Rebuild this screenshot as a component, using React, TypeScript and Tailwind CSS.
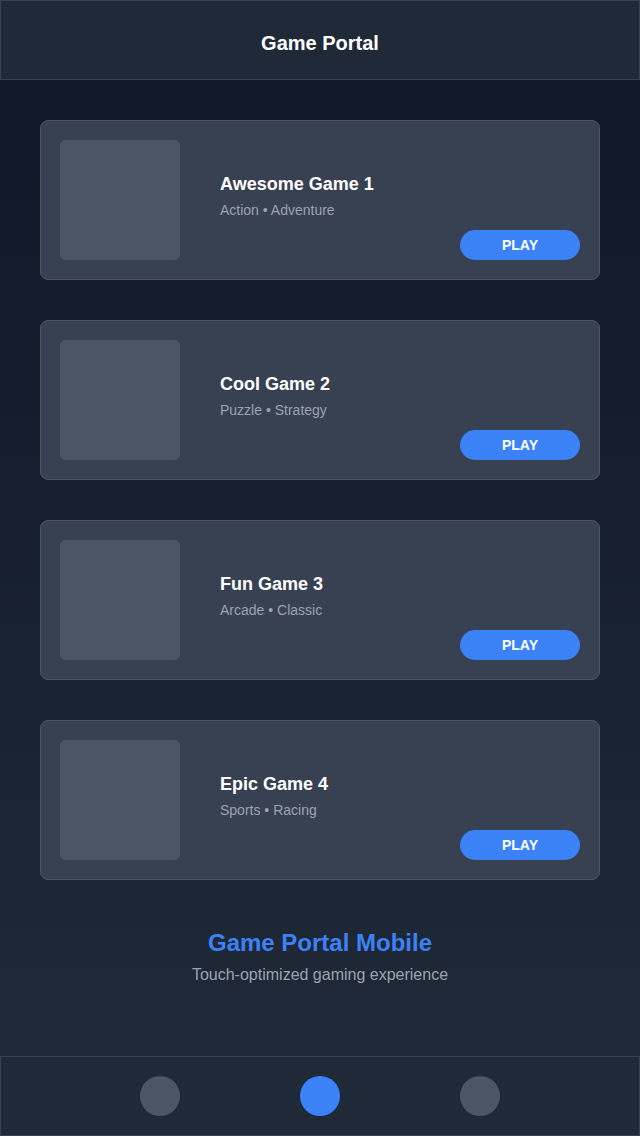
import React from "react";

const games = [
  { title: "Awesome Game 1", genre: "Action • Adventure" },
  { title: "Cool Game 2", genre: "Puzzle • Strategy" },
  { title: "Fun Game 3", genre: "Arcade • Classic" },
  { title: "Epic Game 4", genre: "Sports • Racing" },
];

export default function App() {
  return (
    <div
      className="flex h-[1136px] w-[640px] flex-col overflow-hidden bg-[#1f2937] text-white"
      style={{ fontFamily: '"Liberation Sans", Arial, sans-serif' }}
    >
      <header className="flex h-[80px] shrink-0 items-center justify-center border border-[#374151] bg-[#1f2937] pt-[6px]">
        <h1 className="text-[20px] font-bold leading-7">Game Portal</h1>
      </header>

      <main className="flex flex-1 flex-col bg-linear-to-b from-[#111827] to-[#1f2937] px-10 pt-10">
        <div className="flex flex-col gap-10">
          {games.map((g) => (
            <div
              key={g.title}
              className="flex h-[160px] items-stretch gap-10 rounded-lg border border-[#4b5563] bg-[#374151] p-[19px]"
            >
              <div className="h-[120px] w-[120px] shrink-0 rounded-md bg-[#4b5563]" />
              <div className="flex flex-1 flex-col justify-end">
                <div className="text-[18px] font-bold leading-7 text-white">{g.title}</div>
                <div className="mt-0.5 text-[14px] leading-5 text-[#9ca3af]">{g.genre}</div>
                <button className="mt-[10px] h-[30px] w-[120px] self-end rounded-full bg-[#3b82f6] text-[14px] font-bold text-white">
                  PLAY
                </button>
              </div>
            </div>
          ))}
        </div>

        <div className="mt-[47px] flex flex-col items-center">
          <div className="text-[24px] font-bold leading-8 text-[#3b82f6]">Game Portal Mobile</div>
          <div className="mt-1 text-[16px] leading-6 text-[#9ca3af]">Touch-optimized gaming experience</div>
        </div>
      </main>

      <nav className="flex h-[80px] shrink-0 items-center justify-center gap-[120px] border border-[#374151] bg-[#1f2937]">
        <div className="h-10 w-10 rounded-full bg-[#4b5563]" />
        <div className="h-10 w-10 rounded-full bg-[#3b82f6]" />
        <div className="h-10 w-10 rounded-full bg-[#4b5563]" />
      </nav>
    </div>
  );
}
